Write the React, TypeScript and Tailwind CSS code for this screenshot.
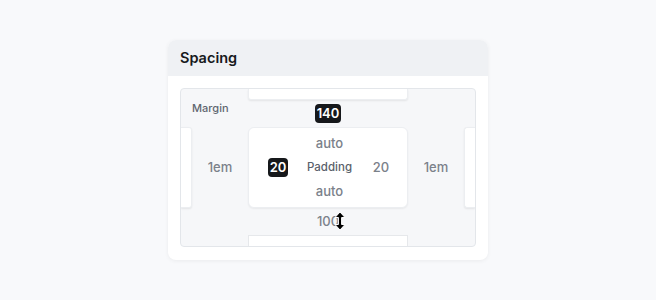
import React from "react";

function Cursor() {
  return (
    <svg width="14" height="20" viewBox="0 0 14 20" className="absolute" style={{ left: 165, top: 171 }}>
      <path
        d="M7 1 L12 6.5 L8.6 6.5 L8.6 13.5 L12 13.5 L7 19 L2 13.5 L5.4 13.5 L5.4 6.5 L2 6.5 Z"
        fill="#000"
        stroke="#fff"
        strokeWidth="1"
        strokeLinejoin="round"
      />
    </svg>
  );
}

export default function App() {
  return (
    <div
      className="w-[656px] h-[300px] bg-[#f8f9fb] pt-[40px] pl-[168px]"
      style={{ fontFamily: "Inter, 'Noto Sans', sans-serif" }}
    >
      <div className="relative w-[320px] h-[220px] bg-white rounded-[8px] overflow-hidden shadow-[0_1px_4px_rgba(0,0,0,0.06)]">
        <div className="h-[36px] bg-[#eff1f4] flex items-center px-[12px] text-[14.5px] font-semibold text-[#17191c]">
          Spacing
        </div>
        <div className="p-[12px] pb-[13px]">
          <div className="relative h-[159px] rounded-[4px] border border-[#e3e6ea] bg-[#f6f7f9] overflow-hidden grid grid-cols-[11px_56px_160px_56px_11px] grid-rows-[11px_27px_81px_27px_11px]">
            <div className="absolute left-[11px] top-[11px] text-[11px] font-medium text-[#5f6670]">Margin</div>
            {/* row 1 */}
            <div />
            <div />
            <div className="bg-white rounded-b-[3px] shadow-[0_1px_2px_rgba(0,0,0,0.08)] border-x border-b border-[#eceef1]" />
            <div />
            <div />
            {/* row 2 */}
            <div />
            <div />
            <div className="flex items-center justify-center">
              <span className="bg-[#16181b] text-white text-[13px] font-semibold rounded-[4px] h-[19px] px-[2px] flex items-center leading-none">
                140
              </span>
            </div>
            <div />
            <div />
            {/* row 3 */}
            <div className="bg-white rounded-r-[3px] shadow-[0_1px_2px_rgba(0,0,0,0.08)] border-y border-r border-[#eceef1]" />
            <div className="flex items-center justify-center text-[13px] font-medium text-[#7b818a]">1em</div>
            <div className="bg-white rounded-[6px] border border-[#eceef1] shadow-[0_1px_2px_rgba(0,0,0,0.06)] grid grid-cols-[58px_1fr_58px] grid-rows-[24px_24px_24px] content-center">
              <div />
              <div className="flex items-center justify-center text-[13px] font-medium text-[#7b818a]">auto</div>
              <div />
              <div className="flex items-center justify-center">
                <span className="bg-[#16181b] text-white text-[13px] font-semibold rounded-[4px] h-[19px] w-[20px] flex items-center justify-center leading-none">
                  20
                </span>
              </div>
              <div className="flex items-center justify-center text-[11.5px] font-medium text-[#5a616b]">Padding</div>
              <div className="flex items-center justify-center text-[13px] font-medium text-[#7b818a]">20</div>
              <div />
              <div className="flex items-center justify-center text-[13px] font-medium text-[#7b818a]">auto</div>
              <div />
            </div>
            <div className="flex items-center justify-center text-[13px] font-medium text-[#7b818a]">1em</div>
            <div className="bg-white rounded-l-[3px] shadow-[0_1px_2px_rgba(0,0,0,0.08)] border-y border-l border-[#eceef1]" />
            {/* row 4 */}
            <div />
            <div />
            <div className="flex items-center justify-center text-[13px] font-medium text-[#7b818a]">100</div>
            <div />
            <div />
            {/* row 5 */}
            <div />
            <div />
            <div className="bg-white border-x border-t border-[#e6e8eb]" />
            <div />
            <div />
          </div>
        </div>
        <Cursor />
      </div>
    </div>
  );
}
